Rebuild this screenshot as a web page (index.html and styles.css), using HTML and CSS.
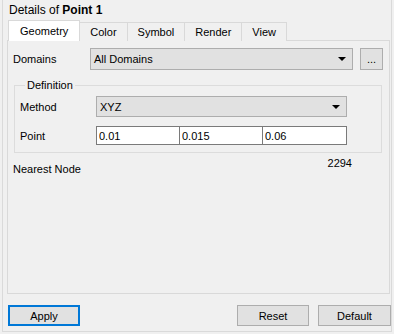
FILE: index.html
```html
<!DOCTYPE html>
<html lang="en">
<head>
<meta charset="UTF-8" />
<title>Details of Point 1</title>
<link rel="stylesheet" href="styles.css">
</head>
<body>

<div class="panel">
  <div class="title">Details of <b>Point 1</b></div>

  <div class="tabs">
    <span class="tab active">Geometry</span>
    <span class="tab">Color</span>
    <span class="tab">Symbol</span>
    <span class="tab">Render</span>
    <span class="tab">View</span>
  </div>

  <div class="pane">
    <div class="row domains">
      <span class="label">Domains</span>
      <div class="combo wide">All Domains<span class="arrow"></span></div>
      <button class="dots">...</button>
    </div>

    <fieldset class="group">
      <legend>Definition</legend>
      <div class="row">
        <span class="label">Method</span>
        <div class="combo">XYZ<span class="arrow"></span></div>
      </div>
      <div class="row">
        <span class="label">Point</span>
        <div class="coords">
          <input type="text" value="0.01" />
          <input type="text" value="0.015" />
          <input type="text" value="0.06" />
        </div>
      </div>
    </fieldset>

    <div class="nearest">
      <span class="label">Nearest Node</span>
      <span class="value">2294</span>
    </div>
  </div>

  <div class="actions">
    <button class="btn primary">Apply</button>
    <span class="spacer"></span>
    <button class="btn">Reset</button>
    <button class="btn">Default</button>
  </div>
</div>

</body>
</html>
```

FILE: styles.css
```css
body {
  margin: 0;
  background: #f0f0f0;
  color: #000;
  font-family: 'Liberation Sans', Arial, sans-serif;
  font-size: 11px;
}
.panel {
  margin: 0 2px;
  height: 332px;
  box-sizing: border-box;
  border: 1px solid #dadada;
  border-top: none;
  display: flex;
  flex-direction: column;
}
.title {
  height: 21px;
  line-height: 21px;
  padding-left: 6px;
  font-size: 12px;
}
.tabs {
  display: flex;
  align-items: flex-end;
  padding-left: 5px;
  height: 20px;
  position: relative;
  z-index: 1;
}
.tab {
  height: 18px;
  line-height: 19px;
  border: 1px solid #d9d9d9;
  border-bottom: none;
  margin-left: -1px;
  padding: 0 10px;
  background: #f0f0f0;
}
.tab:first-child {
  margin-left: 0;
}
.tab.active {
  height: 20px;
  line-height: 21px;
  background: #fff;
  padding: 0 11px;
}
.pane {
  margin: -1px 1px 0 4px;
  height: 254px;
  border: 1px solid #d9d9d9;
  padding: 7px 6px 0 5px;
  box-sizing: border-box;
}
.row {
  display: flex;
  align-items: center;
}
.label {
  width: 77px;
  flex: none;
}
.domains .combo {
  height: 22px;
  flex: 1;
}
.combo {
  box-sizing: border-box;
  height: 21px;
  width: 251px;
  background: #e1e1e1;
  border: 1px solid #adadad;
  padding-left: 3px;
  display: flex;
  align-items: center;
  justify-content: space-between;
}
.arrow {
  width: 0;
  height: 0;
  margin-right: 6px;
  border-left: 4px solid transparent;
  border-right: 4px solid transparent;
  border-top: 4px solid #000;
}
.dots {
  margin-left: 7px;
  width: 23px;
  height: 22px;
  padding: 0;
  background: #e1e1e1;
  border: 1px solid #adadad;
  font-family: inherit;
  font-size: 11px;
}
.group {
  margin: 9px 1px 0 1px;
  border: 1px solid #dcdcdc;
  padding: 5px 0 7px 5px;
}
.group legend {
  padding: 0 2px;
  margin-left: 5px;
}
.group .label {
  width: 76px;
}
.group .row + .row {
  margin-top: 9px;
}
.coords {
  display: flex;
}
.coords input {
  box-sizing: border-box;
  width: 84px;
  height: 19px;
  margin: 0 -1px 0 0;
  border: 1px solid #7a7a7a;
  padding: 0 2px;
  font-family: inherit;
  font-size: 11px;
  background: #fff;
}
.coords input:last-child {
  width: 85px;
}
.nearest {
  display: flex;
  justify-content: space-between;
  margin-top: 4px;
  padding-right: 31px;
}
.nearest .label {
  padding-top: 6px;
}
.actions {
  display: flex;
  padding: 11px 0 0 5px;
}
.spacer {
  flex: 1;
}
.btn {
  box-sizing: border-box;
  width: 72px;
  height: 21px;
  margin-left: 9px;
  background: #e1e1e1;
  border: 1px solid #adadad;
  font-family: inherit;
  font-size: 11px;
  padding: 0;
}
.btn:last-child {
  width: 73px;
}
.btn.primary {
  margin-left: 0;
  border: 2px solid #0078d7;
}
```
